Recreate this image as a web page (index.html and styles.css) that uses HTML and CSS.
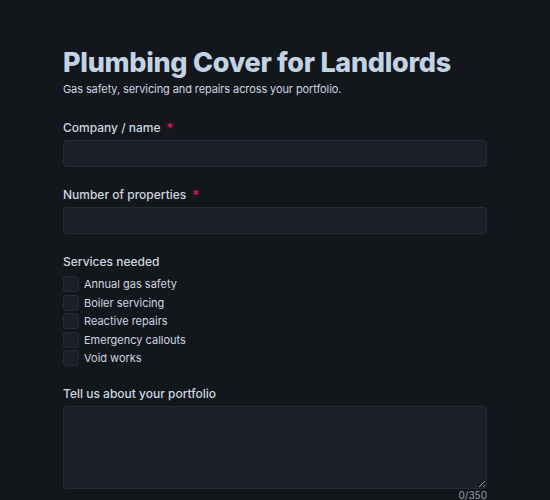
FILE: index.html
```html
<!DOCTYPE html>
<html lang="en">
<head>
    <meta charset="UTF-8">
    <title>Plumbing Cover for Landlords</title>
    <link rel="stylesheet" href="styles.css">
</head>
<body>
    <div class="container">
        <h1>Plumbing Cover for Landlords</h1>
        <p class="lead">Gas safety, servicing and repairs across your portfolio.</p>

        <div class="field">
            <label for="company">Company / name <span class="req">*</span></label>
            <input type="text" id="company">
        </div>

        <div class="field">
            <label for="props">Number of properties <span class="req">*</span></label>
            <input type="text" id="props">
        </div>

        <div class="field">
            <div class="legend">Services needed</div>
            <label class="check"><input type="checkbox"> Annual gas safety</label>
            <label class="check"><input type="checkbox"> Boiler servicing</label>
            <label class="check"><input type="checkbox"> Reactive repairs</label>
            <label class="check"><input type="checkbox"> Emergency callouts</label>
            <label class="check"><input type="checkbox"> Void works</label>
        </div>

        <div class="field last">
            <label for="about">Tell us about your portfolio</label>
            <textarea id="about" maxlength="350"></textarea>
            <div class="count">0/350</div>
        </div>
    </div>
</body>
</html>
```

FILE: styles.css
```css
body {
    margin: 0;
    font-family: 'Inter', 'Liberation Sans', sans-serif;
    background: #13171c;
    color: #cdd6e0;
}
.container {
    width: 424px;
    margin: 0 auto;
    padding-top: 47px;
}
h1 {
    margin: 0;
    font-size: 27px;
    line-height: 32px;
    font-weight: 800;
    color: #c3d3e6;
    letter-spacing: -0.3px;
}
.lead {
    margin: 3px 0 0;
    font-size: 11px;
    line-height: 14px;
    letter-spacing: -0.1px;
    color: #cdd6e0;
}
.field {
    margin-top: 20px;
}
.field:first-of-type {
    margin-top: 24px;
}
.field.last {
    margin-top: 20px;
}
.field label,
.legend {
    display: block;
    font-size: 12px;
    line-height: 15px;
    font-weight: 500;
    margin-bottom: 5px;
}
.legend {
    margin-bottom: 7px;
}
.req {
    color: #e0195a;
    margin-left: 3px;
    text-shadow: 0 0 4px rgba(224, 25, 90, 0.6);
}
input[type="text"],
textarea {
    display: block;
    box-sizing: border-box;
    width: 100%;
    height: 27px;
    margin: 0;
    background: #1b2028;
    border: 1px solid #262c36;
    border-radius: 4px;
    color: #cdd6e0;
    font: inherit;
}
textarea {
    height: 83px;
    resize: vertical;
}
.field .check {
    display: flex;
    align-items: center;
    gap: 5px;
    font-size: 11px;
    line-height: 16px;
    font-weight: 400;
    margin: 0 0 2.5px;
}
.check input {
    appearance: none;
    width: 16px;
    height: 16px;
    margin: 0;
    background: #1b2028;
    border: 1px solid #262c36;
    border-radius: 3px;
}
.count {
    text-align: right;
    font-size: 10px;
    line-height: 10px;
    color: #949daa;
    margin-top: 1px;
}
```
